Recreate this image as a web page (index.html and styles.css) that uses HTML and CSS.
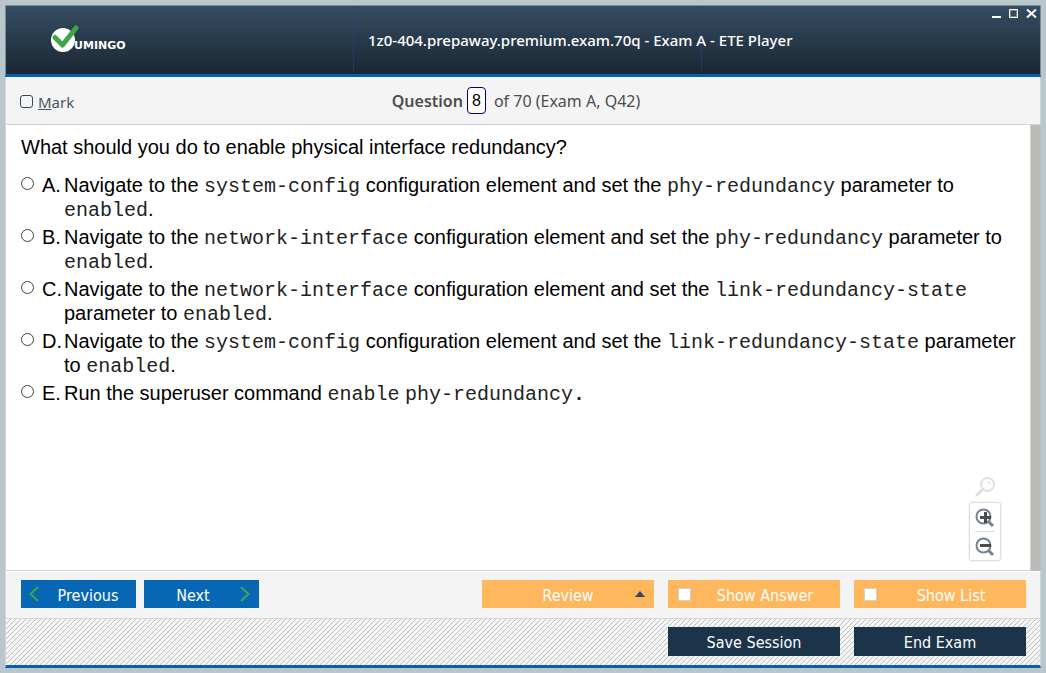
FILE: index.html
```html
<!DOCTYPE html>
<html lang="en">
<head>
<meta charset="utf-8">
<title>ETE Player</title>
<link rel="stylesheet" href="styles.css">
</head>
<body>
<div class="window">
  <header class="titlebar">
    <div class="brand">
      <svg class="logo" viewBox="0 0 80 30" width="80" height="30" role="img" aria-label="Vumingo">
        <circle cx="12" cy="16" r="12" fill="#fff"/>
        <path d="M4 13.500 L11.500 21 L25 4" fill="none" stroke="#43a447" stroke-width="5" stroke-linecap="round" stroke-linejoin="round"/>
        <text class="logo-text" x="23" y="25">UMINGO</text>
      </svg>
    </div>
    <h1 class="title">1z0-404.prepaway.premium.exam.70q - Exam A - ETE Player</h1>
    <div class="controls">
      <button class="control" aria-label="Minimize"><svg width="12" height="12" viewBox="0 0 12 12"><path d="M0 8h9" stroke="#fff" stroke-width="2"/></svg></button>
      <button class="control" aria-label="Maximize"><svg width="12" height="12" viewBox="0 0 12 12" fill="none"><path d="M.5 .5h8v8h-8z" stroke="#fff"/><path d="M1.500 1.500h6v6h-6z" stroke="#8b8580"/></svg></button>
      <button class="control" aria-label="Close"><svg width="12" height="12" viewBox="0 0 12 12"><path d="M1 .5L10 8.500M10 .5L1 8.500" stroke="#fff" stroke-width="2"/></svg></button>
    </div>
  </header>

  <div class="toolbar">
    <label class="mark"><input class="mark-box" type="checkbox"><span><u>M</u>ark</span></label>
    <div class="position">
      <label class="position-label" for="number">Question</label>
      <input class="number" id="number" type="text" value="8">
      <span>of 70 (Exam A, Q42)</span>
    </div>
  </div>

  <div class="body">
    <main class="content">
      <h2 class="question" id="question">What should you do to enable physical interface redundancy?</h2>
      <div class="answers" role="radiogroup" aria-labelledby="question">
        <label class="answer"><input class="radio" type="radio" name="answer"><span>A.</span><span>Navigate to the <code>system-config</code> configuration element and set the <code>phy-redundancy</code> parameter to <code>enabled</code>.</span></label>
        <label class="answer"><input class="radio" type="radio" name="answer"><span>B.</span><span>Navigate to the <code>network-interface</code> configuration element and set the <code>phy-redundancy</code> parameter to <code>enabled</code>.</span></label>
        <label class="answer"><input class="radio" type="radio" name="answer"><span>C.</span><span>Navigate to the <code>network-interface</code> configuration element and set the <code>link-redundancy-state</code> parameter to <code>enabled</code>.</span></label>
        <label class="answer"><input class="radio" type="radio" name="answer"><span>D.</span><span>Navigate to the <code>system-config</code> configuration element and set the <code>link-redundancy-state</code> parameter to <code>enabled</code>.</span></label>
        <label class="answer"><input class="radio" type="radio" name="answer"><span>E.</span><span>Run the superuser command <code>enable</code> <code>phy-redundancy</code><code class="stop">.</code></span></label>
      </div>
    </main>
    <div class="scrollbar"></div>
    <div class="zoom">
      <svg class="lens" width="20" height="20" viewBox="0 0 20 20" fill="none" stroke="#dfdfdf" stroke-linecap="round"><circle cx="12.500" cy="7.500" r="6.500" stroke-width="2"/><path d="M7.500 12.500L2 18" stroke-width="3"/><path d="M12.500 4.500a3 3 0 0 1 3 3" stroke-width="1"/></svg>
      <div class="zoom-box">
        <button class="zoom-button" aria-label="Zoom in"><svg width="20" height="20" viewBox="0 0 20 20" fill="none"><circle cx="8.500" cy="8.500" r="7" stroke="#75838f" stroke-width="2"/><path d="M13.500 13.500L18 18" stroke="#75838f" stroke-width="3"/><path d="M5 9.500h11M10.500 4v11" stroke="#4c4c4c" stroke-width="3"/></svg></button>
        <button class="zoom-button" aria-label="Zoom out"><svg width="20" height="20" viewBox="0 0 20 20" fill="none"><circle cx="8.500" cy="8.500" r="7" stroke="#75838f" stroke-width="2"/><path d="M13.500 13.500L18 18" stroke="#75838f" stroke-width="3"/><path d="M5 8.500h11" stroke="#4c4c4c" stroke-width="3"/></svg></button>
      </div>
    </div>
  </div>

  <div class="actions">
    <button class="button blue"><svg class="arrow-left" width="10" height="16" viewBox="0 0 10 16"><path d="M9 1L1.500 8L9 15" fill="none" stroke="#43a447" stroke-width="2"/></svg>Previous</button>
    <button class="button blue next">Next<svg class="arrow-right" width="10" height="16" viewBox="0 0 10 16"><path d="M1 1L8.500 8L1 15" fill="none" stroke="#43a447" stroke-width="2"/></svg></button>
    <button class="button orange review">Review<svg class="caret" width="10" height="6" viewBox="0 0 10 6"><path d="M0 6L5 0L10 6z" fill="#34495e"/></svg></button>
    <label class="button orange"><input class="square" type="checkbox"><span class="toggle-text">Show Answer</span></label>
    <label class="button orange"><input class="square" type="checkbox"><span class="toggle-text">Show List</span></label>
  </div>

  <footer class="session">
    <button class="button navy">Save Session</button>
    <button class="button navy">End Exam</button>
  </footer>
</div>
</body>
</html>
```

FILE: styles.css
```css
* { box-sizing: border-box; }

body {
  margin: 0;
  padding: 5px;
  height: 100vh;
  background: #b9c6cc;
  font-family: "Noto Sans", sans-serif;
}

button, input { font: inherit; margin: 0; }

.window {
  display: flex;
  flex-direction: column;
  height: 100%;
  min-height: 560px;
}

.titlebar {
  display: grid;
  grid-template-columns: 347px 349px 1fr;
  height: 72px;
  border: 1px solid #7d8f96;
  border-bottom: 3px solid #0560b3;
  background: linear-gradient(#354d61, #1a2734);
  color: #fff;
}

.brand { padding: 18px 0 0 45px; }

.logo { display: block; }

.logo-text {
  font: bold 11px "DejaVu Sans", sans-serif;
  fill: #fff;
}

.title {
  display: flex;
  align-items: center;
  margin: 0;
  padding-left: 14px;
  border: 1px dotted #2d3f86;
  border-width: 0 1px;
  font: 500 15px "Noto Sans", sans-serif;
  white-space: nowrap;
}

.controls {
  display: flex;
  justify-content: flex-end;
  align-items: flex-start;
  gap: 5px;
  padding: 3px 2px;
}

.control {
  display: flex;
  padding: 0;
  border: 0;
  background: none;
}

.toolbar {
  display: grid;
  grid-template-columns: 1fr auto 1fr;
  align-items: center;
  height: 48px;
  padding: 0 14px;
  border: 1px solid #d4d4d4;
  border-top: 0;
  background: #f4f4f4;
  color: #4d4d4d;
  font-size: 16px;
}

.mark {
  display: flex;
  align-items: center;
  gap: 5px;
  padding-top: 2px;
  color: #4a5560;
  font-size: 15px;
}

.mark-box {
  appearance: none;
  width: 13px;
  height: 13px;
  border: 1px solid #34495e;
  border-radius: 3px;
}

.position {
  display: flex;
  align-items: center;
  gap: 4px;
  margin-right: 14px;
}

.position-label { font-weight: 600; }

.number {
  width: 19px;
  height: 27px;
  margin-right: 4px;
  padding: 0;
  border: 1px solid #00007f;
  border-radius: 4px;
  background: #fff;
  color: #000;
  text-align: center;
  font: 16px "Liberation Sans", sans-serif;
}

.body {
  position: relative;
  display: flex;
  flex: 1;
  min-height: 0;
  background: #fff;
}

.content {
  flex: 1;
  padding: 10px 10px 0 15px;
  border: 1px solid #d4d4d4;
  border-top: 0;
  color: #000;
  font: 20px/24px "Liberation Sans", Arial, sans-serif;
}

.scrollbar {
  width: 10px;
  background: #bbbab6;
}

.question {
  margin: 0 0 14px;
  font: inherit;
}

.answers {
  display: flex;
  flex-direction: column;
  gap: 4px;
}

.answer {
  display: grid;
  grid-template-columns: 21px 22px 1fr;
  align-items: start;
}

.radio {
  appearance: none;
  width: 13px;
  height: 13px;
  margin-top: 4px;
  border: 1px solid #444;
  border-radius: 50%;
}

code {
  color: #222;
  font: 20px/20px "Liberation Mono", "Courier New", monospace;
}

.stop { font-weight: bold; }

.zoom {
  position: absolute;
  right: 40px;
  bottom: 10px;
  display: flex;
  flex-direction: column;
  align-items: center;
  gap: 5px;
}

.zoom-box {
  display: flex;
  flex-direction: column;
  padding: 0 5px;
  border: 1px solid #dedede;
  border-radius: 3px;
  box-shadow: 0 0 2px #ddd;
}

.zoom-button {
  display: flex;
  padding: 5px 0 3px;
  border: 0;
  background: none;
}

.zoom-button + .zoom-button { border-top: 1px solid #dedede; }

.actions {
  display: flex;
  gap: 14px;
  height: 48px;
  padding: 8px 14px 0 15px;
  border: 1px solid #d4d4d4;
  border-top: 1px solid #fff;
  background: #f4f4f4;
}

.session {
  display: flex;
  justify-content: flex-end;
  gap: 14px;
  height: 49px;
  padding: 8px 14px 0;
  border: 1px solid #d4d4d4;
  border-top: 0;
  border-bottom: 3px solid #0560b3;
  background: #f5f5f5 url("data:image/svg+xml,%3Csvg xmlns='http://www.w3.org/2000/svg' width='5' height='5'%3E%3Cpath fill='%23bfbfbf' d='M4 0h1v1h-1zM3 1h1v1h-1zM2 2h1v1h-1zM1 3h1v1h-1zM0 4h1v1h-1z'/%3E%3C/svg%3E");
}

.button {
  position: relative;
  display: flex;
  align-items: center;
  justify-content: center;
  width: 172px;
  height: 28px;
  padding: 2px 0 0;
  border: 0;
  color: #fff;
  font: 16px "DejaVu Sans Condensed", "Noto Sans", sans-serif;
}

.blue {
  width: 115px;
  padding-left: 19px;
  background: #0867b5;
}

.next {
  margin-left: -6px;
  padding: 2px 17px 0 0;
}

.orange { background: #ffb75d; }

.review { margin-left: auto; }

.navy {
  height: 29px;
  background: #1b344a;
}

.arrow-left, .arrow-right, .caret, .square { position: absolute; }

.arrow-left { left: 8px; top: 6px; }

.arrow-right { right: 9px; top: 6px; }

.caret { right: 9px; top: 11px; }

.square {
  left: 10px;
  top: 8px;
  appearance: none;
  width: 13px;
  height: 13px;
  border: 1px solid #d0d0d0;
  background: #fff;
}

.toggle-text { padding-left: 22px; }
```
